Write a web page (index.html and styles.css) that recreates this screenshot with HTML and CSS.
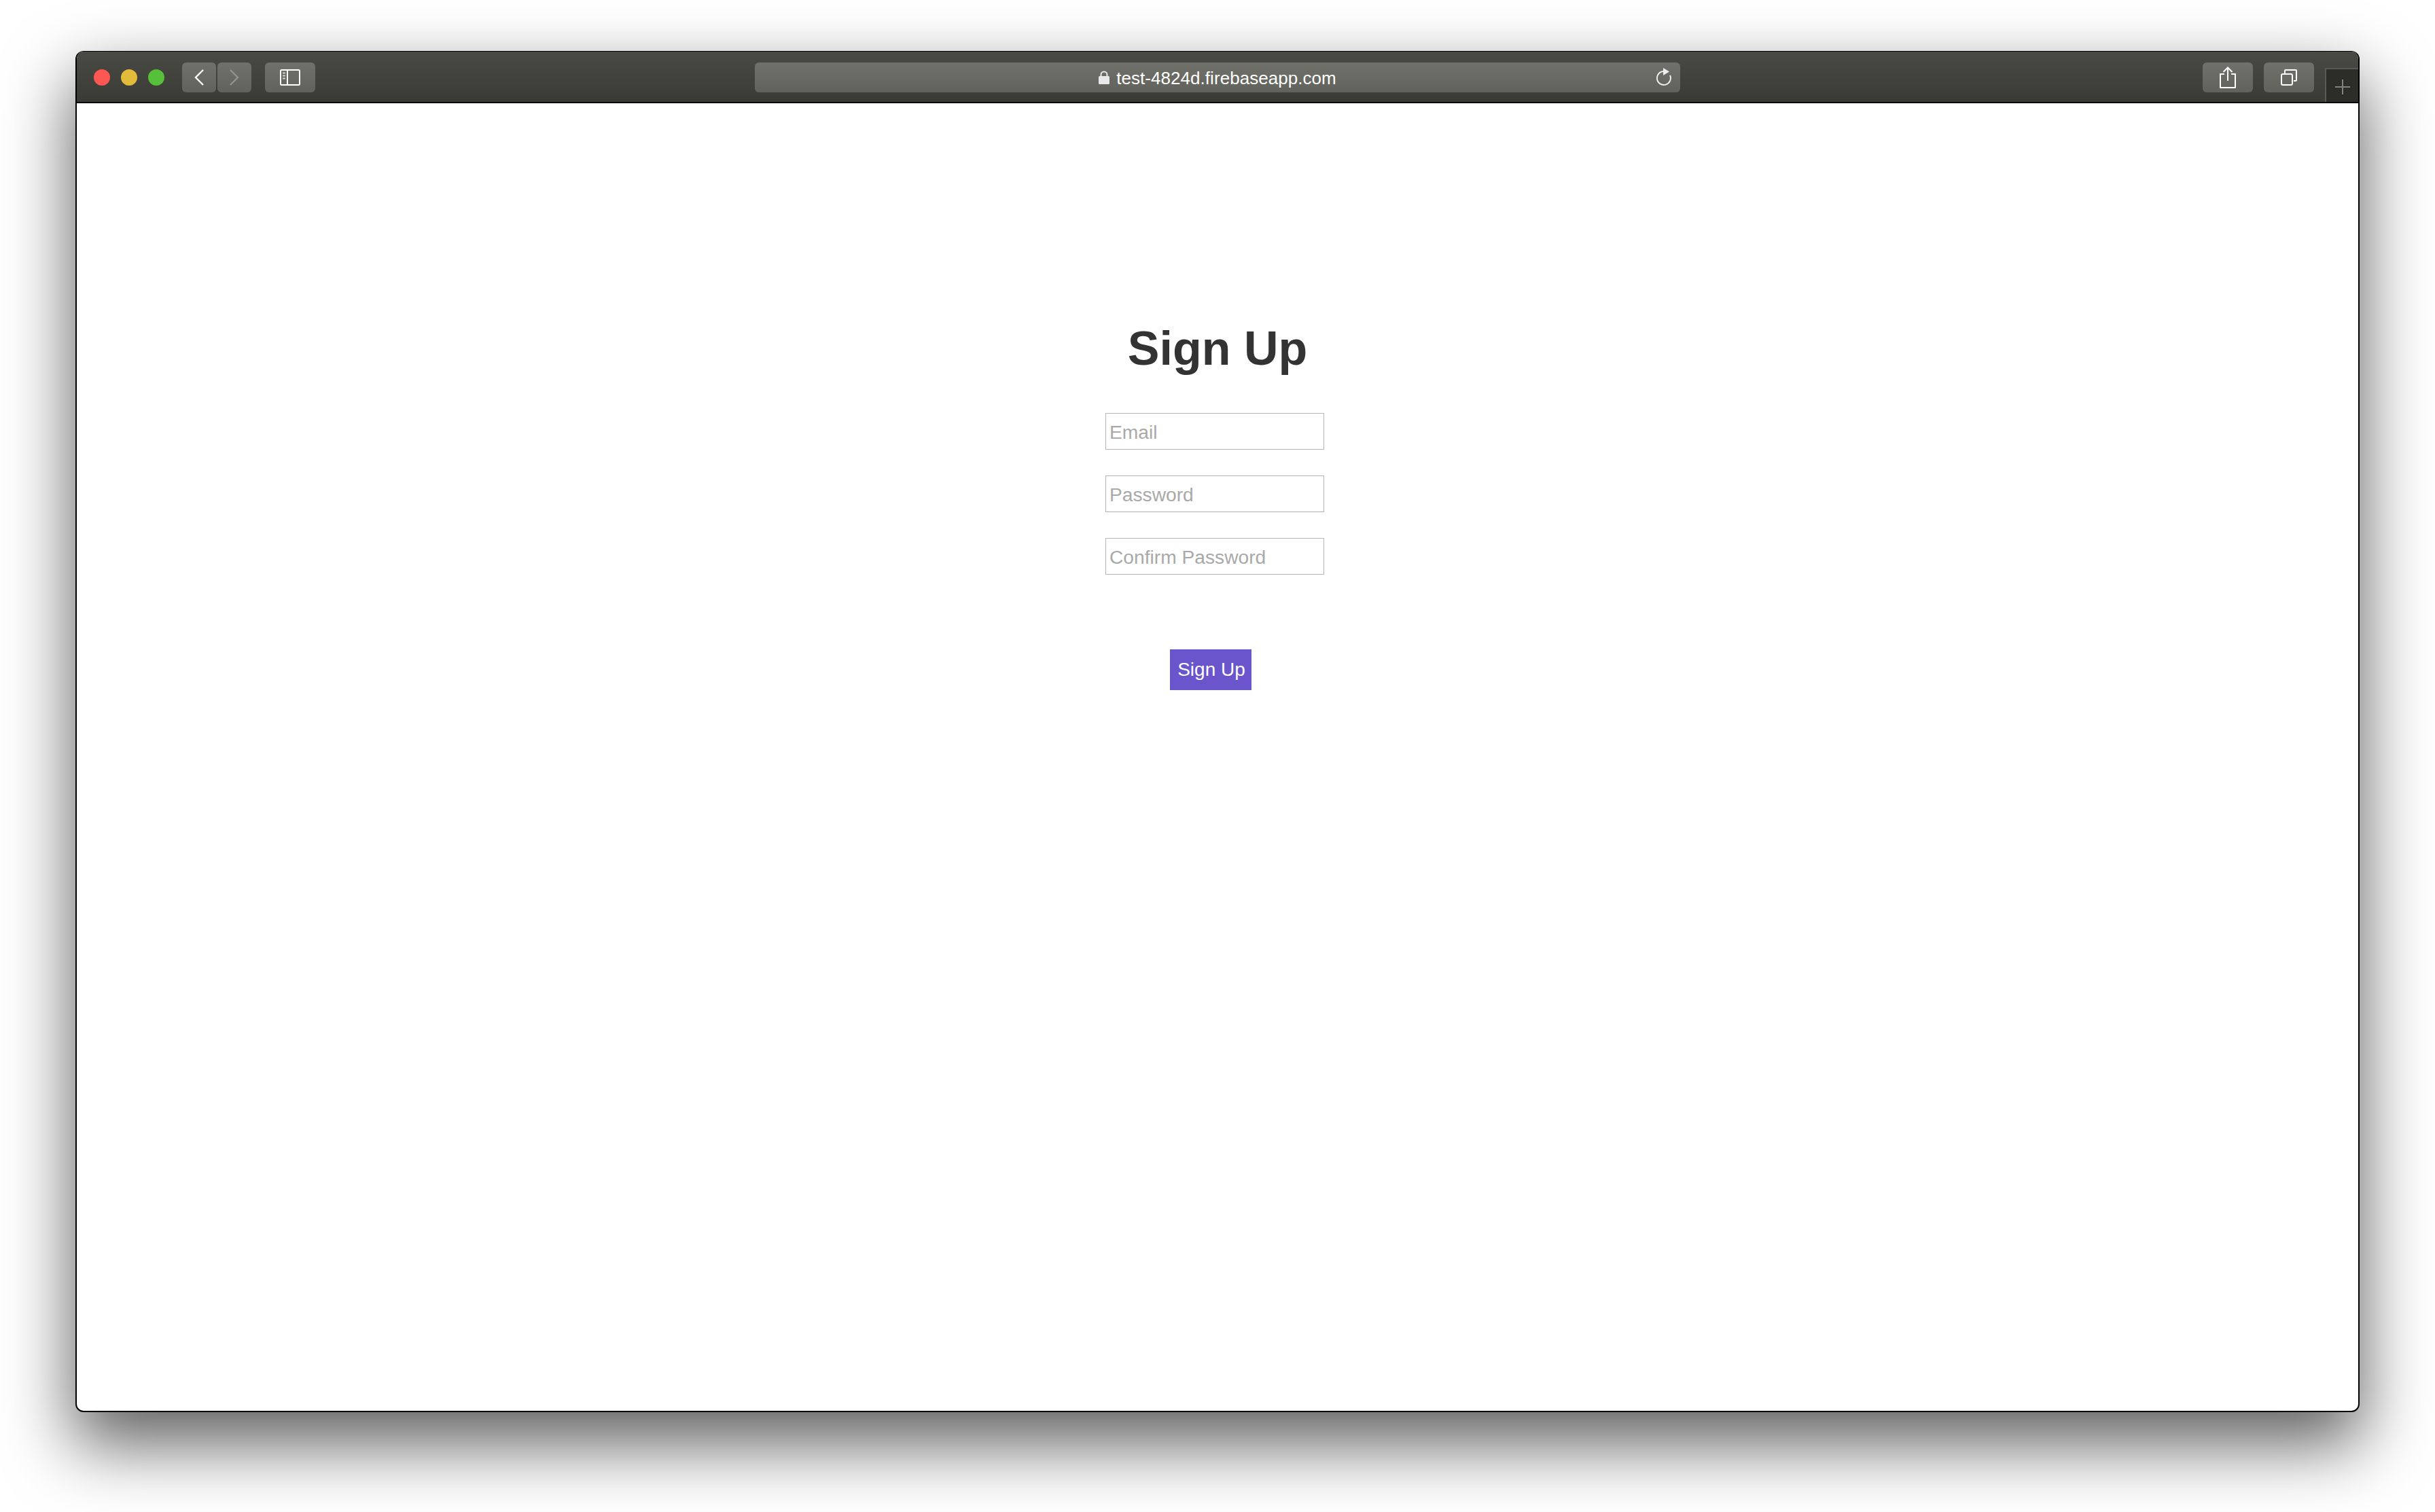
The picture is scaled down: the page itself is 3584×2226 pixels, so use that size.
FILE: index.html
```html
<!doctype html>
<html>
<head>
    <meta charset="utf-8">
    <title>Sign Up</title>
    <link rel="stylesheet" href="styles.css">
</head>

<body class="desk">
<div class="window">
    <div class="toolbar">
        <div class="lights">
            <span class="light light-red"></span>
            <span class="light light-yellow"></span>
            <span class="light light-green"></span>
        </div>

        <div class="nav-group">
            <div class="tool tool-nav">
                <svg width="16" height="26" viewBox="0 0 16 26"><path d="M14 2 L3 13 L14 24" fill="none" stroke="#fff" stroke-width="2.4"/></svg>
            </div>
            <div class="tool tool-nav">
                <svg width="16" height="26" viewBox="0 0 16 26"><path d="M2 2 L13 13 L2 24" fill="none" stroke="#93938e" stroke-width="2.4"/></svg>
            </div>
        </div>

        <div class="tool tool-wide tool-sidebar">
            <svg width="30" height="24" viewBox="0 0 30 24">
                <rect x="1" y="1" width="28" height="22" rx="1.5" fill="none" stroke="#fff" stroke-width="2"/>
                <path d="M11 1 V23" stroke="#fff" stroke-width="2"/>
                <path d="M4 5.5 H8 M4 9.5 H8 M4 13.5 H8" stroke="#d0d0cd" stroke-width="2"/>
            </svg>
        </div>

        <div class="address">
            <div class="address-text">
                <svg width="16" height="20" viewBox="0 0 16 20">
                    <path d="M3.5 9 V6 a4.5 4.5 0 0 1 9 0 V9" fill="none" stroke="#e8e8e8" stroke-width="2"/>
                    <rect x="0" y="8" width="16" height="12" rx="1.5" fill="#e8e8e8"/>
                </svg>
                <span class="address-host">test-4824d.firebaseapp.com</span>
            </div>
            <svg class="reload" width="24" height="30" viewBox="0 0 24 30">
                <path d="M11 7 A10 10 0 1 0 20 12.8" fill="none" stroke="#eee" stroke-width="2"/>
                <path d="M10 2 L19 7.5 L10 13 Z" fill="#eee"/>
            </svg>
        </div>

        <div class="tool tool-wide tool-share">
            <svg width="24" height="32" viewBox="0 0 24 32">
                <path d="M7 11 H1 V31 H23 V11 H17" fill="none" stroke="#fff" stroke-width="2" stroke-linejoin="round"/>
                <path d="M12 2 V21 M5.5 8 L12 1.5 L18.5 8" fill="none" stroke="#fff" stroke-width="2"/>
            </svg>
        </div>
        <div class="tool tool-wide tool-tabs">
            <svg width="24" height="24" viewBox="0 0 24 24">
                <rect x="1" y="7" width="16" height="16" rx="2" fill="none" stroke="#fff" stroke-width="2"/>
                <path d="M6 6 V2 Q6 1 7 1 H22 Q23 1 23 2 V16 Q23 17 22 17 H19" fill="none" stroke="#fff" stroke-width="2"/>
            </svg>
        </div>
        <div class="new-tab">
            <svg width="22" height="22" viewBox="0 0 22 22"><path d="M11 0 V22 M0 11 H22" stroke="#83837f" stroke-width="2"/></svg>
        </div>
    </div>

    <div class="page">
        <h1 class="title">Sign Up</h1>

        <form class="signup-form" action="#" method="post">
            <input class="field" type="email" placeholder="Email">
            <input class="field" type="password" placeholder="Password">
            <input class="field" type="password" placeholder="Confirm Password">
            <button class="submit" type="submit">Sign Up</button>
        </form>
    </div>
</div>
</body>
</html>
```

FILE: styles.css
```css
html {
    height: 100%;
}

.desk {
    margin: 0;
    height: 2226px;
    padding: 75px 111px 147px;
    box-sizing: border-box;
    overflow: hidden;
    background: #fff;
    font-family: "Liberation Sans", Arial, sans-serif;
}

.window {
    display: flex;
    flex-direction: column;
    height: 100%;
    box-sizing: border-box;
    border: 2px solid #000;
    border-top-width: 1px;
    border-radius: 12px;
    overflow: hidden;
    background: #fff;
    box-shadow: 0 44px 100px 4px rgba(0, 0, 0, 0.62);
}

.toolbar {
    display: flex;
    align-items: flex-start;
    flex: none;
    height: 76px;
    box-sizing: border-box;
    padding: 16px 0 0 25px;
    background: linear-gradient(to bottom, #4a4a44, #3b3b36);
    border-bottom: 2px solid #000;
}

.lights {
    display: flex;
    gap: 16px;
    margin-top: 10px;
    margin-right: 26px;
}

.light {
    width: 24px;
    height: 24px;
    border-radius: 50%;
}

.light-red {
    background: #fc5753;
}

.light-yellow {
    background: #e3bb3a;
}

.light-green {
    background: #56c03a;
}

.nav-group {
    display: flex;
    gap: 2px;
    margin-right: 20px;
}

.tool {
    display: flex;
    flex: none;
    align-items: center;
    justify-content: center;
    height: 44px;
    border-radius: 6px;
    background: linear-gradient(to bottom, #71716b, #62625c);
}

.tool-nav {
    width: 50px;
}

.tool-wide {
    width: 74px;
}

.address {
    display: flex;
    flex: none;
    align-items: center;
    justify-content: center;
    position: relative;
    width: 1362px;
    height: 44px;
    margin-left: 647px;
    border-radius: 6px;
    background: linear-gradient(to bottom, #71716b, #62625c);
}

.address-text {
    display: flex;
    align-items: center;
    gap: 10px;
    color: #fff;
    font-size: 26px;
    letter-spacing: 0.05px;
}

.address-host {
    padding-top: 2px;
}

.reload {
    position: absolute;
    right: 11px;
    top: 6px;
}

.tool-share {
    margin-left: 769px;
}

.tool-tabs {
    margin-left: 16px;
}

.new-tab {
    display: flex;
    flex: none;
    align-items: center;
    justify-content: center;
    width: 49px;
    height: 50px;
    margin-top: 8px;
    margin-left: 16px;
    box-sizing: border-box;
    padding-top: 4px;
    background: #2c2c29;
    border-top: 2px solid #5a5a55;
    border-left: 2px solid #5a5a55;
}

.page {
    flex: 1;
    padding-top: 316px;
    text-align: center;
}

.title {
    margin: 0 0 50px;
    color: #333;
    font-size: 70px;
    line-height: 90px;
    font-weight: bold;
}

.signup-form {
    display: flex;
    flex-direction: column;
    align-items: center;
}

.field {
    display: block;
    width: 322px;
    height: 54px;
    box-sizing: border-box;
    margin: 0 8px 38px 0;
    padding: 2px 5px 0;
    border: 1px solid #b4b4b4;
    border-radius: 0;
    background: #fff;
    font-family: inherit;
    font-size: 28.2px;
    outline: 0;
}

.field::placeholder {
    color: #a9a9a9;
    opacity: 1;
}

.submit {
    width: 120px;
    height: 60px;
    margin: 72px 20px 0 0;
    padding: 0 0 0 2px;
    border: 0;
    background: #6a55cc;
    color: #fff;
    font-family: inherit;
    font-size: 28px;
}
```
